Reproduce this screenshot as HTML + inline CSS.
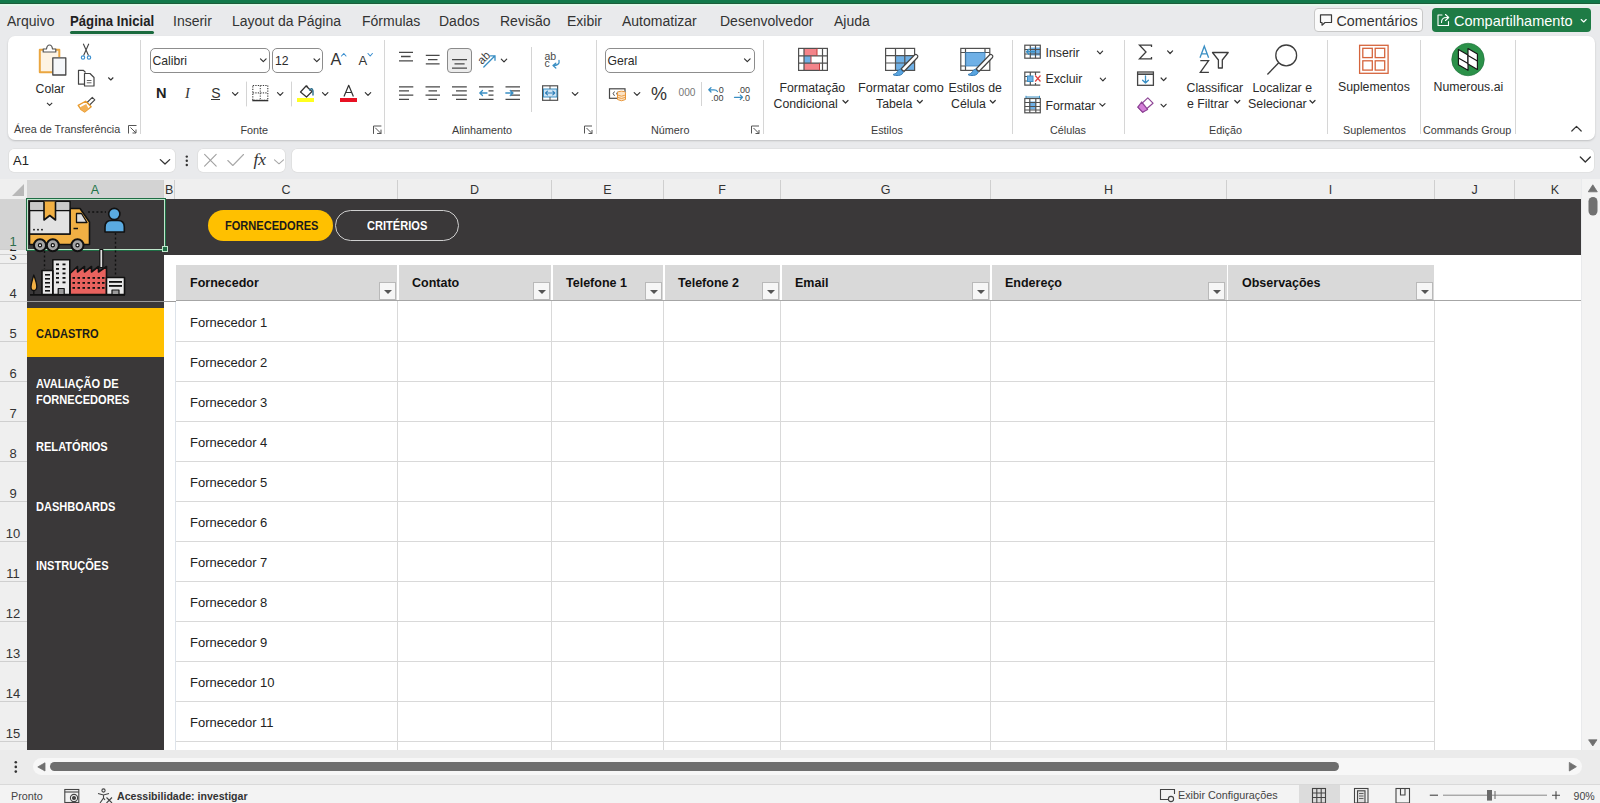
<!DOCTYPE html>
<html><head><meta charset="utf-8">
<style>
*{box-sizing:border-box}
html,body{margin:0;padding:0}
body{width:1600px;height:803px;overflow:hidden;position:relative;background:#e9eaec;font-family:"Liberation Sans",sans-serif;color:#242424}
.a{position:absolute}
.t{position:absolute;white-space:nowrap;line-height:1}
.sep{position:absolute;width:1px;background:#d6d6d6}
.gl{position:absolute;font-size:10.8px;color:#3b3b3b;white-space:nowrap;line-height:1}
.rb{font-size:12.3px;color:#2b2b2b}
.chev{position:absolute;width:5px;height:5px;border-right:1.2px solid #444;border-bottom:1.2px solid #444;transform:rotate(45deg)}
.ch{position:absolute;top:180px;height:19px;font-size:12.5px;color:#333;text-align:center;line-height:20px;border-right:1px solid #cfcfcf}
.rn{position:absolute;left:0;width:26px;text-align:center;font-size:13px}
.rh{position:absolute;left:0;width:27px;font-size:13px;color:#333;text-align:center;border-bottom:1px solid #d3d3d3;background:#f0f0f0}
.th{position:absolute;top:265px;height:36px;background:#d9d9d9;font-weight:bold;font-size:12.5px;color:#111}
.fb{position:absolute;top:282px;width:17px;height:18px;background:#f6f6f6;border:1px solid #b9b9b9}
.fb:after{content:"";position:absolute;left:4px;top:7px;border-left:4px solid transparent;border-right:4px solid transparent;border-top:4px solid #555}
.cell{position:absolute;left:190px;font-size:13px;color:#222;white-space:nowrap;line-height:1}
.nav{position:absolute;left:36px;font-weight:bold;font-size:12.3px;color:#fff;white-space:nowrap;line-height:16px;transform-origin:0 0;transform:scaleX(.9)}
</style></head>
<body>
<!-- top green bar -->
<div class="a" style="left:0;top:0;width:1600px;height:4px;background:#11794a"></div>
<div class="a" style="left:0;top:3px;width:1600px;height:1px;background:#1b5e3a"></div>
<div class="a" style="left:0;top:4px;width:1600px;height:2px;background:#e2f8ea"></div>

<!-- tabs -->
<div id="tabs">
<span class="t" style="left:7px;top:14px;font-size:14px;color:#333">Arquivo</span>
<span class="t" style="left:70px;top:14px;font-size:14px;font-weight:bold;color:#222;transform-origin:0 0;transform:scaleX(.94)">Página Inicial</span>
<span class="t" style="left:173px;top:14px;font-size:14px;color:#333">Inserir</span>
<span class="t" style="left:232px;top:14px;font-size:14px;color:#333">Layout da Página</span>
<span class="t" style="left:362px;top:14px;font-size:14px;color:#333">Fórmulas</span>
<span class="t" style="left:439px;top:14px;font-size:14px;color:#333">Dados</span>
<span class="t" style="left:500px;top:14px;font-size:14px;color:#333">Revisão</span>
<span class="t" style="left:567px;top:14px;font-size:14px;color:#333">Exibir</span>
<span class="t" style="left:622px;top:14px;font-size:14px;color:#333">Automatizar</span>
<span class="t" style="left:720px;top:14px;font-size:14px;color:#333">Desenvolvedor</span>
<span class="t" style="left:834px;top:14px;font-size:14px;color:#333">Ajuda</span>
<div class="a" style="left:70px;top:31px;width:84px;height:3px;border-radius:2px;background:#1b6b3f"></div>
</div>

<!-- comments / share -->
<div class="a" style="left:1314px;top:8px;width:109px;height:24px;border:1px solid #c8c8c8;border-radius:4px;background:#fbfbfb"></div>
<span class="t" style="left:1336.5px;top:14.3px;font-size:14.3px;color:#333">Comentários</span>
<svg class="a" style="left:1318px;top:12px" width="16" height="16" viewBox="0 0 16 16"><path d="M2.5 2.8 H13.5 V10.5 H7 L4 13.2 V10.5 H2.5 Z" fill="none" stroke="#3a3a3a" stroke-width="1.2" stroke-linejoin="round"/></svg>
<div class="a" style="left:1432px;top:8px;width:159px;height:24px;border-radius:4px;background:#1e7b45"></div>
<span class="t" style="left:1454px;top:14.2px;font-size:14.5px;color:#fff">Compartilhamento</span>
<svg class="a" style="left:1435px;top:12px" width="156" height="16" viewBox="1435 12 156 16"><g fill="none" stroke="#fff" stroke-width="1.1" stroke-linejoin="round" stroke-linecap="round"><path d="M1442 15 H1438 V25.5 H1448.5 V21.5"/><path d="M1441.5 22.5 Q1441.5 17.5 1446.5 17.5 H1448 M1445.5 14.5 L1448.7 17.5 L1445.5 20.5"/><path d="M1581.2 19.5 L1583.7 22 L1586.2 19.5"/></g></svg>

<!-- ribbon panel -->
<div id="ribbon" class="a" style="left:8px;top:36px;width:1587px;height:104px;background:#fff;border-radius:7px;box-shadow:0 1px 2px rgba(0,0,0,.18)"></div>
<div class="sep" style="left:140px;top:40px;height:94px"></div>
<div class="sep" style="left:384px;top:40px;height:94px"></div>
<div class="sep" style="left:596px;top:40px;height:94px"></div>
<div class="sep" style="left:763px;top:40px;height:94px"></div>
<div class="sep" style="left:1012px;top:40px;height:94px"></div>
<div class="sep" style="left:1124px;top:40px;height:94px"></div>
<div class="sep" style="left:1327px;top:40px;height:94px"></div>
<div class="sep" style="left:1420px;top:40px;height:94px"></div>
<div class="sep" style="left:1515px;top:40px;height:94px"></div>

<!-- ===== ribbon: clipboard ===== -->
<svg class="a" style="left:0;top:36px" width="140" height="80" viewBox="0 36 140 80">
<g fill="none" stroke-linejoin="round">
<rect x="39.8" y="49.8" width="19.5" height="22.4" fill="#fdf3e3" stroke="none"/>
<path d="M45 49.8 H39.8 V72.2 H52.5" stroke="#eaa640" stroke-width="2"/>
<path d="M52.5 49.8 H59.3 V57" stroke="#eaa640" stroke-width="2"/>
<path d="M43.2 52 V49 H46.5 Q47 45 49.5 45 Q52 45 52.5 49 H55.8 V52 Z" stroke="#555" stroke-width="1.2" fill="#fff"/>
<rect x="52.8" y="57.8" width="13" height="17.2" stroke="#454545" stroke-width="1.3" fill="#f5f7fa"/>
<path d="M47 102.8 L49.6 105.3 L52.2 102.8" stroke="#333" stroke-width="1.1"/>
<!-- scissors -->
<path d="M83.3 43.8 L88.5 55.5 M88.8 43.8 L83.6 55.5" stroke="#444" stroke-width="1.1"/>
<circle cx="83" cy="57.6" r="1.7" stroke="#3a8fd0" stroke-width="1.1"/>
<circle cx="89" cy="57.6" r="1.7" stroke="#3a8fd0" stroke-width="1.1"/>
<!-- copy -->
<path d="M84.5 84.2 H78.5 V70.3 H83.5 L85.5 72.5" stroke="#444" stroke-width="1.2"/>
<path d="M84.5 73.5 H90 L94 77.5 V86 H84.5 Z" stroke="#444" stroke-width="1.2" fill="#fff"/>
<path d="M86.8 80.5 H91.5 M86.8 82.8 H91.5" stroke="#555" stroke-width="0.9"/>
<path d="M108.3 77.5 L110.8 80 L113.3 77.5" stroke="#333" stroke-width="1.1"/>
<!-- format painter -->
<path d="M92.3 97.3 L94.8 99.8 L89.6 105 L87.1 102.5 Z" stroke="#454545" stroke-width="1.1" fill="#fff"/>
<path d="M85.6 101.2 L91.2 106.8 L84.6 112 Q80.2 109.6 78.2 105.4 Z" stroke="#e99a2c" stroke-width="1.3" fill="#fff"/>
<path d="M79.6 107.6 L86.2 104 L88.6 108.8 L84.6 112 Q81.4 110.2 79.6 107.6 Z" fill="#f2b055" stroke="none"/>
</g>
</svg>
<span class="t rb" style="left:35.5px;top:82.5px">Colar</span>
<svg class="a" style="left:127px;top:124px" width="11" height="11" viewBox="0 0 11 11"><path d="M1.5 9.5 V1.5 H9.5" fill="none" stroke="#555" stroke-width="1"/><path d="M3.5 3.5 L9 9 M9 5.5 V9 H5.5" fill="none" stroke="#555" stroke-width="1"/></svg>
<!-- ===== ribbon: fonte ===== -->
<div class="a" style="left:150px;top:47.5px;width:119.5px;height:25px;border:1px solid #8d8d8d;border-radius:5px;background:#fff"></div>
<span class="t" style="left:152.5px;top:54.8px;font-size:12.2px;color:#2b2b2b">Calibri</span>
<div class="a" style="left:272px;top:47.5px;width:50.5px;height:25px;border:1px solid #8d8d8d;border-radius:5px;background:#fff"></div>
<span class="t" style="left:275px;top:54.8px;font-size:12.2px;color:#2b2b2b">12</span>
<svg class="a" style="left:0;top:36px" width="390" height="100" viewBox="0 36 390 100">
<g fill="none" stroke-linecap="round" stroke-linejoin="round">
<path d="M260.5 58.8 L263.3 61.6 L266.1 58.8" stroke="#333" stroke-width="1.2"/>
<path d="M314 58.8 L316.8 61.6 L319.6 58.8" stroke="#333" stroke-width="1.2"/>
<path d="M341.5 56 L343.8 53.5 L346 56" stroke="#3a8fd0" stroke-width="1.1"/>
<path d="M368 53.5 L370.2 56 L372.4 53.5" stroke="#3a8fd0" stroke-width="1.1"/>
<path d="M232.5 92.6 L235.2 95.3 L237.9 92.6" stroke="#333" stroke-width="1.2"/>
<path d="M277.5 92.6 L280.2 95.3 L282.9 92.6" stroke="#333" stroke-width="1.2"/>
<path d="M322.5 92.6 L325.2 95.3 L327.9 92.6" stroke="#333" stroke-width="1.2"/>
<path d="M365.3 92.6 L368 95.3 L370.7 92.6" stroke="#333" stroke-width="1.2"/>
<!-- borders -->
<rect x="252.8" y="85.5" width="15" height="14.8" stroke="#3a3a3a" stroke-width="1.1" stroke-dasharray="1.3 1.2" stroke-linecap="butt"/>
<path d="M260.3 85.5 V100 M252.8 92.9 H267.8" stroke="#555" stroke-width="1.1" stroke-dasharray="1.3 1.2" stroke-linecap="butt"/>
<path d="M252.3 100.6 H268.3" stroke="#333" stroke-width="1.4" stroke-linecap="butt"/>
<!-- fill -->
<path d="M300.5 92 L306 86 L312 91.5 L306.5 97 Z" stroke="#333" stroke-width="1.2"/>
<path d="M305.5 86.5 Q307 84.5 308 86.5" stroke="#333" stroke-width="1"/>
<path d="M309.5 90 Q312 87 313 91 V95" stroke="#2e6f8c" stroke-width="1.4"/>
<rect x="297" y="98" width="17" height="4" fill="#ffff1f" stroke="none"/>
<!-- font color -->
<path d="M344 96.6 L348.7 85.3 L353.4 96.6 M345.8 92.5 H351.6" stroke="#333" stroke-width="1.2" stroke-linecap="butt"/>
<rect x="340" y="98" width="17" height="4" fill="#e81123" stroke="none"/>
<!-- separators -->
<path d="M246.5 82 V106 M291.5 82 V106" stroke="#d4d4d4" stroke-width="1"/>
<!-- launcher -->
<path d="M373.5 133.5 V126 H381" stroke="#555" stroke-width="1"/><path d="M375.5 128 L381 133.5 M381 130 V133.5 H377.5" stroke="#555" stroke-width="1"/>
</g>
</svg>
<span class="t" style="left:330.5px;top:51px;font-size:16.2px;color:#333">A</span>
<span class="t" style="left:358.5px;top:54px;font-size:13px;color:#333">A</span>
<span class="t" style="left:156px;top:85.5px;font-size:14.6px;font-weight:bold;color:#222">N</span>
<span class="t" style="left:185px;top:85.7px;font-size:14.5px;font-style:italic;font-family:'Liberation Serif',serif;color:#333">I</span>
<span class="t" style="left:211.2px;top:85.7px;font-size:14px;color:#333">S</span>
<div class="a" style="left:211px;top:99px;width:9px;height:1.2px;background:#333"></div>

<!-- ===== ribbon: alinhamento + numero ===== -->
<div class="a" style="left:605px;top:48px;width:150px;height:25px;border:1px solid #8d8d8d;border-radius:5px;background:#fff"></div>
<span class="t" style="left:607.5px;top:54.8px;font-size:12.2px;color:#2b2b2b">Geral</span>

<div class="a" style="left:447px;top:47.5px;width:24.5px;height:25px;border:1px solid #8a8a8a;border-radius:4px;background:#ececec"></div>
<svg class="a" style="left:380px;top:36px" width="400" height="100" viewBox="380 36 400 100">
<g fill="none" stroke="#484848" stroke-width="1.3" stroke-linecap="butt">
<path d="M399 52.3 H413 M401 56.5 H410.6 M399 60.9 H413"/>
<path d="M425.8 55.3 H439.6 M428 59.6 H437.5 M425.8 63.9 H439.6"/>
<path d="M452 59.6 H467 M454.5 63.9 H464.6 M452 68.2 H467"/>
<path d="M399 86.8 H413.3 M399 90.9 H409 M399 95.1 H413.3 M399 99.3 H409"/>
<path d="M425.5 86.8 H440 M428.5 90.9 H437 M425.5 95.1 H440 M428.5 99.3 H437"/>
<path d="M452 86.8 H466.8 M456 90.9 H466.8 M452 95.1 H466.8 M456 99.3 H466.8"/>
<path d="M479 86.8 H493.5 M488.5 90.9 H493.5 M488.5 95.1 H493.5 M479 99.3 H493.5"/>
<path d="M505.5 86.8 H520 M510.5 90.9 H520 M510.5 95.1 H520 M505.5 99.3 H520"/>
</g>
<g fill="none" stroke="#3a8fc4" stroke-width="1.3" stroke-linecap="round" stroke-linejoin="round">
<path d="M487 93 H479.8 M482.5 90.5 L479.8 93 L482.5 95.5"/>
<path d="M505.8 93 H513 M510.3 90.5 L513 93 L510.3 95.5"/>
<path d="M483.8 67 L495 55.8 M490.5 55.8 H495 V60.3"/>
<path d="M559 60.5 Q560 65 554 65.5 M555.8 63.2 L553 65.6 L555.8 68"/>
</g>
<text x="0" y="0" transform="translate(482,65) rotate(-45)" font-family="Liberation Sans" font-size="11.5" fill="#404040">ab</text>
<text x="544.5" y="59.6" font-family="Liberation Sans" font-size="10.5" fill="#484848">ab</text>
<text x="544.6" y="67.4" font-family="Liberation Sans" font-size="10.5" fill="#484848">c</text>
<!-- merge -->
<rect x="542.6" y="85.8" width="15" height="14.5" fill="#fff" stroke="#505050" stroke-width="1.2"/>
<rect x="543.5" y="89" width="13.4" height="8" fill="#cfe4f4" stroke="#3a8fc4" stroke-width="1"/>
<path d="M550 85.8 V89 M550 97 V100.3" stroke="#505050" stroke-width="1"/>
<path d="M545.5 93 H554.8 M547.5 91.2 L545.5 93 L547.5 94.8 M552.8 91.2 L554.8 93 L552.8 94.8" fill="none" stroke="#2f7fb8" stroke-width="1.1" stroke-linecap="round" stroke-linejoin="round"/>
<!-- chevrons -->
<g fill="none" stroke="#333" stroke-width="1.2" stroke-linecap="round" stroke-linejoin="round">
<path d="M501.3 59.2 L504 61.9 L506.7 59.2"/>
<path d="M572.3 92.6 L575.1 95.4 L577.9 92.6"/>
<path d="M634.2 92.6 L637 95.4 L639.8 92.6"/>
<path d="M744.5 58.8 L747.3 61.6 L750.1 58.8"/>
</g>
<path d="M531.5 47 V112 M701.5 82 V106" stroke="#d4d4d4" stroke-width="1"/>
<!-- launchers -->
<g fill="none" stroke="#555" stroke-width="1">
<path d="M584.5 133.5 V126 H592 M586.5 128 L592 133.5 M592 130 V133.5 H588.5"/>
<path d="M751.5 133.5 V126 H759 M753.5 128 L759 133.5 M759 130 V133.5 H755.5"/>
</g>
<!-- currency -->
<rect x="609.5" y="88.8" width="15.5" height="9.5" fill="#fff" stroke="#474747" stroke-width="1.2"/>
<path d="M614.5 91.5 Q611.8 93.5 614.5 95.8 M618 91.5 Q615.3 93.5 618 95.8" fill="none" stroke="#474747" stroke-width="1"/>
<ellipse cx="621.5" cy="92.8" rx="4" ry="1.6" fill="#fbe2c4" stroke="#e8963a" stroke-width="1"/>
<path d="M617.5 92.8 V99.5 Q621.5 102 625.5 99.5 V92.8" fill="#fbe2c4" stroke="#e8963a" stroke-width="1"/>
<path d="M617.5 95 Q621.5 97.4 625.5 95 M617.5 97.3 Q621.5 99.7 625.5 97.3" fill="none" stroke="#e8963a" stroke-width="0.9"/>
<!-- decimals -->
<g fill="none" stroke="#3a8fc4" stroke-width="1.3" stroke-linecap="round" stroke-linejoin="round">
<path d="M717.5 91.5 Q716.5 89.8 714 89.8 H708.8 M711 87.6 L708.8 89.8 L711 92"/>
<path d="M734.5 97.3 H742.5 M740.3 95.1 L742.5 97.3 L740.3 99.5"/>
</g>
<g font-family="Liberation Sans" fill="#3c3c3c">
<text x="718.8" y="92.6" font-size="9">0</text>
<text x="711" y="100.6" font-size="9">.00</text>
<text x="737.6" y="92.6" font-size="9">.00</text>
<text x="742.6" y="100.6" font-size="9">.0</text>
</g>
</svg>
<span class="t" style="left:651px;top:85px;font-size:18px;color:#333">%</span>
<span class="t" style="left:678.5px;top:88px;font-size:10.2px;color:#777">000</span>

<!-- ===== ribbon: estilos, celulas, edicao, suplementos ===== -->
<svg class="a" style="left:770px;top:36px" width="830" height="100" viewBox="770 36 830 100">
<!-- conditional formatting -->
<g stroke="none">
<rect x="804" y="48" width="13" height="7.8" fill="#f4848a"/>
<rect x="804" y="63.2" width="15.5" height="7.4" fill="#f4848a"/>
<rect x="804" y="55.8" width="7" height="7.4" fill="#6fb0e6"/>
</g>
<g fill="none" stroke="#505050" stroke-width="1.2">
<rect x="798.6" y="48.4" width="28.8" height="22"/>
<path d="M804 48.4 V70.4 M822.5 48.4 V70.4 M798.6 55.8 H827.4 M798.6 63.2 H827.4"/>
<path d="M817 48.4 V55.8 M811 55.8 V63.2 M819.5 63.2 V70.4" stroke="#c43a3a" stroke-width="1"/>
</g>
<!-- format as table -->
<rect x="895.5" y="55.5" width="19.2" height="15.1" fill="#6fb0e6"/>
<g fill="none" stroke="#505050" stroke-width="1.2">
<rect x="885.6" y="48.4" width="29" height="22"/>
<path d="M895.5 48.4 V70.4 M904.8 48.4 V70.4 M885.6 55.6 H914.6 M885.6 63 H914.6"/>
</g>
<path d="M916.3 54.5 Q918.5 55.5 917.5 57.5 L904 71.5 L901 69 L914.5 55 Q915.3 54.3 916.3 54.5 Z" fill="#fff" stroke="#454545" stroke-width="1.2" stroke-linejoin="round"/>
<path d="M900.2 69.3 L903.3 72.2 Q902 76 895.5 75.5 Q893.5 75.2 893 74.5 Q896.5 74 897.5 71.5 Q898.2 69.6 900.2 69.3 Z" fill="#5aa5e0" stroke="#3a7fb8" stroke-width="1"/>
<!-- cell styles -->
<rect x="965.5" y="52.5" width="19.5" height="13.5" fill="#6fb0e6"/>
<g fill="none" stroke="#505050" stroke-width="1.2">
<rect x="960.8" y="48.4" width="29" height="22"/>
<path d="M965.5 48.4 V70.4 M985 48.4 V52.5 M960.8 52.5 H989.8 M960.8 66 H965.5" />
</g>
<path d="M965.5 52.5 V66 H985 V52.5 Z" fill="none" stroke="#3a7fb8" stroke-width="0.8"/>
<path d="M991.3 54.5 Q993.5 55.5 992.5 57.5 L979 71.5 L976 69 L989.5 55 Q990.3 54.3 991.3 54.5 Z" fill="#fff" stroke="#454545" stroke-width="1.2" stroke-linejoin="round"/>
<path d="M975.2 69.3 L978.3 72.2 Q977 76 970.5 75.5 Q968.5 75.2 968 74.5 Q971.5 74 972.5 71.5 Q973.2 69.6 975.2 69.3 Z" fill="#5aa5e0" stroke="#3a7fb8" stroke-width="1"/>
<!-- insert cells -->
<rect x="1031" y="47.5" width="9" height="8" fill="#6fb0e6"/>
<g fill="none" stroke="#505050" stroke-width="1.2">
<rect x="1024.8" y="45.2" width="15.5" height="13"/>
<path d="M1030.3 45.2 V58.2 M1035.5 45.2 V58.2 M1024.8 49.5 H1040.3 M1024.8 54 H1040.3"/>
</g>
<path d="M1035 51.8 H1026.5 M1029 49.3 L1026.5 51.8 L1029 54.3" fill="none" stroke="#3a8fc4" stroke-width="1.4" stroke-linecap="round" stroke-linejoin="round"/>
<!-- delete cells -->
<g fill="none" stroke="#505050" stroke-width="1.2">
<path d="M1040.3 72.2 H1024.8 V85.2 H1040.3 M1030.3 72.2 V85.2 M1035.5 72.2 V75 M1035.5 83 V85.2 M1024.8 76.5 H1033 M1024.8 81 H1033"/>
</g>
<rect x="1027.5" y="76" width="5.5" height="5.5" fill="#6fb0e6" stroke="#3a8fc4" stroke-width="1"/>
<path d="M1035.2 75.5 L1040.5 81.5 M1040.5 75.5 L1035.2 81.5" stroke="#e04040" stroke-width="1.2"/>
<!-- format cells -->
<rect x="1029.5" y="101.5" width="6.5" height="8" fill="#6fb0e6"/>
<g fill="none" stroke="#505050" stroke-width="1.2">
<rect x="1024.8" y="98.5" width="15.5" height="14.3"/>
<path d="M1029.8 98.5 V112.8 M1035.8 98.5 V112.8 M1024.8 102.5 H1040.3 M1024.8 106.5 H1040.3 M1024.8 110 H1040.3"/>
</g>
<path d="M1026 97 H1039.5 M1026 95.8 V98.2 M1039.5 95.8 V98.2" stroke="#3a8fc4" stroke-width="1"/>
<!-- sigma / fill / clear -->
<path d="M1151.5 47 V45.2 H1139.5 L1146 52 L1139.5 58.8 H1151.5 V57" fill="none" stroke="#3c3c3c" stroke-width="1.3" stroke-linejoin="miter"/>
<rect x="1137.6" y="72" width="15.8" height="13.3" fill="#fff" stroke="#454545" stroke-width="1.3"/>
<path d="M1137.6 74.2 H1153.4" stroke="#454545" stroke-width="1.6"/>
<path d="M1145.5 76 V83 M1142.6 80.2 L1145.5 83 L1148.4 80.2" fill="none" stroke="#3a8fc4" stroke-width="1.3" stroke-linecap="round" stroke-linejoin="round"/>
<path d="M1147.8 97.9 L1153 103.2 L1142.6 112.2 L1137.9 107.1 Z" fill="#fff" stroke="#8e4596" stroke-width="1.2" stroke-linejoin="round"/>
<path d="M1141.6 102 L1147.6 109.4 L1142.6 112.2 L1137.9 107.1 Z" fill="#d47ed8" stroke="#8e4596" stroke-width="1.2" stroke-linejoin="round"/>
<!-- sort filter -->
<path d="M1200 57.8 L1204.3 46.2 L1208.6 57.8 M1201.5 53.8 H1207.1" fill="none" stroke="#3a8fc4" stroke-width="1.3"/>
<path d="M1200.3 60.6 H1208.6 L1200.3 72.3 H1208.9" fill="none" stroke="#3c3c3c" stroke-width="1.3"/>
<path d="M1212.5 52.5 H1228.2 L1222.3 60 V68 H1218.4 V60 Z" fill="none" stroke="#3c3c3c" stroke-width="1.3" stroke-linejoin="round"/>
<!-- find -->
<circle cx="1286.2" cy="55.4" r="10.4" fill="none" stroke="#3c3c3c" stroke-width="1.3"/>
<path d="M1278.7 62.8 L1267.4 74.5" stroke="#3c3c3c" stroke-width="1.3"/>
<!-- suplementos -->
<g fill="none" stroke="#d5643c" stroke-width="1.3">
<rect x="1359.6" y="45.3" width="28.5" height="28"/>
<rect x="1362.8" y="48.3" width="9.5" height="9.3"/><rect x="1375.2" y="48.3" width="9.5" height="9.3"/>
<rect x="1362.8" y="60.8" width="9.5" height="9.3"/><rect x="1375.2" y="60.8" width="9.5" height="9.3"/>
</g>
<!-- numerous -->
<circle cx="1468" cy="59.5" r="16.3" fill="#2b9149" stroke="#1f6f3a" stroke-width="0.6"/>
<g fill="#fff" stroke="#151515" stroke-width="1.15" stroke-linejoin="round">
<path d="M1458.4 49.5 L1468 55 V70.3 L1458.4 64.8 Z"/>
<path d="M1468 48.5 L1477.4 54 V69.5 L1468 64 Z"/>
<path d="M1458.4 58 L1468 63.5 M1468 55.5 L1477.4 61" fill="none"/>
</g>
<!-- chevrons -->
<g fill="none" stroke="#333" stroke-width="1.2" stroke-linecap="round" stroke-linejoin="round">
<path d="M1097.4 51.2 L1100 53.8 L1102.6 51.2"/>
<path d="M1100.3 78.2 L1102.9 80.8 L1105.5 78.2"/>
<path d="M1099.8 103.6 L1102.4 106.2 L1105 103.6"/>
<path d="M1167.6 50.9 L1170.1 53.5 L1172.6 50.9"/>
<path d="M1161.1 78 L1163.6 80.6 L1166.1 78"/>
<path d="M1161.1 104.3 L1163.6 106.9 L1166.1 104.3"/>
<path d="M843 100.5 L845.5 103 L848 100.5"/>
<path d="M917.3 100.5 L919.8 103 L922.3 100.5"/>
<path d="M990.3 100.5 L992.8 103 L995.3 100.5"/>
<path d="M1234.8 100.5 L1237.3 103 L1239.8 100.5"/>
<path d="M1310 100.5 L1312.5 103 L1315 100.5"/>
<path d="M1571.8 131 L1576.5 126.3 L1581.2 131"/>
</g>
</svg>
<span class="t rb" style="left:779.5px;top:81.5px">Formatação</span>
<span class="t rb" style="left:773.5px;top:97.7px">Condicional</span>
<span class="t rb" style="left:857.5px;top:81.5px;transform-origin:0 0;transform:scaleX(1.03)">Formatar como</span>
<span class="t rb" style="left:876px;top:97.7px">Tabela</span>
<span class="t rb" style="left:948.5px;top:81.5px">Estilos de</span>
<span class="t rb" style="left:951px;top:97.7px">Célula</span>
<span class="t rb" style="left:1045.5px;top:46.8px">Inserir</span>
<span class="t rb" style="left:1045.5px;top:73px">Excluir</span>
<span class="t rb" style="left:1045.5px;top:99.6px">Formatar</span>
<span class="t rb" style="left:1186.5px;top:81.7px">Classificar</span>
<span class="t rb" style="left:1187px;top:98.4px">e Filtrar</span>
<span class="t rb" style="left:1252.5px;top:81.7px">Localizar e</span>
<span class="t rb" style="left:1247.5px;top:98.4px;transform-origin:0 0;transform:scaleX(1.01)">Selecionar</span>
<span class="t rb" style="left:1338px;top:80.8px">Suplementos</span>
<span class="t rb" style="left:1433.5px;top:81px">Numerous.ai</span>

<!-- group labels -->
<span class="gl" style="left:14px;top:124px">Área de Transferência</span>
<span class="gl" style="left:240.5px;top:124.5px">Fonte</span>
<span class="gl" style="left:452px;top:124.5px">Alinhamento</span>
<span class="gl" style="left:651px;top:124.5px">Número</span>
<span class="gl" style="left:871px;top:125px">Estilos</span>
<span class="gl" style="left:1050px;top:125px">Células</span>
<span class="gl" style="left:1209px;top:125px">Edição</span>
<span class="gl" style="left:1343px;top:125px">Suplementos</span>
<span class="gl" style="left:1423px;top:125px">Commands Group</span>

<!-- formula bar -->
<div class="a" style="left:8.5px;top:148.5px;width:166.5px;height:23.5px;background:#fff;border-radius:5px;box-shadow:0 0 0 0.6px #dadada"></div>
<span class="t" style="left:13px;top:154px;font-size:13px;color:#222">A1</span>
<div class="a" style="left:198.3px;top:148.5px;width:87px;height:23.5px;background:#fff;border-radius:5px;box-shadow:0 0 0 0.6px #dadada"></div>
<div class="a" style="left:292px;top:148.5px;width:1302px;height:23.5px;background:#fff;border-radius:5px;box-shadow:0 0 0 0.6px #dadada"></div>

<!-- formula bar icons -->
<svg class="a" style="left:0;top:145px" width="1600" height="30" viewBox="0 145 1600 30">
<g fill="none" stroke-linecap="round" stroke-linejoin="round">
<path d="M160.3 159.6 L165 164 L169.7 159.6" stroke="#333" stroke-width="1.3"/>
<path d="M204.6 154.4 L216.2 166.2 M216.2 154.4 L204.6 166.2" stroke="#a0a0a0" stroke-width="1.1"/>
<path d="M227.8 160.5 L232.8 165.5 L243.5 154.5" stroke="#a8a8a8" stroke-width="1.1"/>
<path d="M274.5 159.8 L279 163.8 L283.5 159.8" stroke="#a8a8a8" stroke-width="1.1"/>
<path d="M1580.3 157 L1585.3 162 L1590.3 157" stroke="#333" stroke-width="1.3"/>
</g>
<g fill="#333"><circle cx="186.8" cy="156.6" r="1.2"/><circle cx="186.8" cy="160.8" r="1.2"/><circle cx="186.8" cy="165" r="1.2"/></g>
</svg>
<span class="t" style="left:253.5px;top:150.5px;font-size:17.5px;font-style:italic;font-family:'Liberation Serif',serif;color:#333">fx</span>

<!-- column headers -->
<div class="a" style="left:0;top:179px;width:1581px;height:20px;background:#efefef"></div>
<div id="colh">
<div class="ch" style="left:27px;width:137px;background:#d3d3d3;color:#217346">A</div>
<div class="ch" style="left:164px;width:11px;text-align:left;padding-left:1px">B</div>
<div class="ch" style="left:175px;width:223px">C</div>
<div class="ch" style="left:398px;width:154px">D</div>
<div class="ch" style="left:552px;width:112px">E</div>
<div class="ch" style="left:664px;width:117px">F</div>
<div class="ch" style="left:781px;width:210px">G</div>
<div class="ch" style="left:991px;width:236px">H</div>
<div class="ch" style="left:1227px;width:208px">I</div>
<div class="ch" style="left:1435px;width:80px">J</div>
<div class="ch" style="left:1515px;width:66px;border-right:none;padding-left:14px">K</div>
</div>

<!-- corner triangle -->
<svg class="a" style="left:10px;top:182px" width="16" height="16" viewBox="0 0 16 16"><path d="M2 14 L14 2 V14 Z" fill="#b8b8b8"/></svg>
<div class="a" style="left:0;top:198.5px;width:27px;height:1px;background:#c4c4c4"></div>
<!-- grid background -->
<div class="a" style="left:27px;top:199px;width:1554px;height:551px;background:#fff"></div>

<!-- row headers -->
<div id="rowh">
<div class="a" style="left:0;top:199px;width:27px;height:551px;background:#efefef"></div>
<div class="a" style="left:0;top:199px;width:27px;height:50px;background:#d3d3d3"></div>
<div class="a" style="left:0;top:249px;width:27px;height:1px;background:#cfcfcf"></div>
<span class="t rn" style="top:234.7px;color:#2e6e4e">1</span>
<div class="a" style="left:0;top:254px;width:27px;height:1px;background:#cfcfcf"></div>
<div class="a" style="left:0;top:263px;width:27px;height:1px;background:#cfcfcf"></div>
<div class="a" style="left:0;top:301px;width:27px;height:1px;background:#cfcfcf"></div>
<span class="t rn" style="top:286.7px;color:#333">4</span>
<div class="a" style="left:0;top:341px;width:27px;height:1px;background:#cfcfcf"></div>
<span class="t rn" style="top:326.7px;color:#333">5</span>
<div class="a" style="left:0;top:381px;width:27px;height:1px;background:#cfcfcf"></div>
<span class="t rn" style="top:366.7px;color:#333">6</span>
<div class="a" style="left:0;top:421px;width:27px;height:1px;background:#cfcfcf"></div>
<span class="t rn" style="top:406.7px;color:#333">7</span>
<div class="a" style="left:0;top:461px;width:27px;height:1px;background:#cfcfcf"></div>
<span class="t rn" style="top:446.7px;color:#333">8</span>
<div class="a" style="left:0;top:501px;width:27px;height:1px;background:#cfcfcf"></div>
<span class="t rn" style="top:486.7px;color:#333">9</span>
<div class="a" style="left:0;top:541px;width:27px;height:1px;background:#cfcfcf"></div>
<span class="t rn" style="top:526.7px;color:#333">10</span>
<div class="a" style="left:0;top:581px;width:27px;height:1px;background:#cfcfcf"></div>
<span class="t rn" style="top:566.7px;color:#333">11</span>
<div class="a" style="left:0;top:621px;width:27px;height:1px;background:#cfcfcf"></div>
<span class="t rn" style="top:606.7px;color:#333">12</span>
<div class="a" style="left:0;top:661px;width:27px;height:1px;background:#cfcfcf"></div>
<span class="t rn" style="top:646.7px;color:#333">13</span>
<div class="a" style="left:0;top:701px;width:27px;height:1px;background:#cfcfcf"></div>
<span class="t rn" style="top:686.7px;color:#333">14</span>
<div class="a" style="left:0;top:741px;width:27px;height:1px;background:#cfcfcf"></div>
<span class="t rn" style="top:726.7px;color:#333">15</span>
<div class="a" style="left:0;top:249px;width:27px;height:5px;overflow:hidden"><span class="t rn" style="top:-9.4px">2</span></div><div class="a" style="left:0;top:255px;width:27px;height:8px;overflow:hidden"><span class="t rn" style="top:-6.4px">3</span></div>
</div>
<!-- gridlines -->
<div id="grid">
<div class="a" style="left:175px;top:341px;width:1260px;height:1px;background:#d9d9d9"></div>
<div class="a" style="left:175px;top:381px;width:1260px;height:1px;background:#d9d9d9"></div>
<div class="a" style="left:175px;top:421px;width:1260px;height:1px;background:#d9d9d9"></div>
<div class="a" style="left:175px;top:461px;width:1260px;height:1px;background:#d9d9d9"></div>
<div class="a" style="left:175px;top:501px;width:1260px;height:1px;background:#d9d9d9"></div>
<div class="a" style="left:175px;top:541px;width:1260px;height:1px;background:#d9d9d9"></div>
<div class="a" style="left:175px;top:581px;width:1260px;height:1px;background:#d9d9d9"></div>
<div class="a" style="left:175px;top:621px;width:1260px;height:1px;background:#d9d9d9"></div>
<div class="a" style="left:175px;top:661px;width:1260px;height:1px;background:#d9d9d9"></div>
<div class="a" style="left:175px;top:701px;width:1260px;height:1px;background:#d9d9d9"></div>
<div class="a" style="left:175px;top:741px;width:1260px;height:1px;background:#d9d9d9"></div>
<div class="a" style="left:397px;top:301px;width:1px;height:449px;background:#d9d9d9"></div>
<div class="a" style="left:551px;top:301px;width:1px;height:449px;background:#d9d9d9"></div>
<div class="a" style="left:663px;top:301px;width:1px;height:449px;background:#d9d9d9"></div>
<div class="a" style="left:780px;top:301px;width:1px;height:449px;background:#d9d9d9"></div>
<div class="a" style="left:990px;top:301px;width:1px;height:449px;background:#d9d9d9"></div>
<div class="a" style="left:1226px;top:301px;width:1px;height:449px;background:#d9d9d9"></div>
<div class="a" style="left:1434px;top:301px;width:1px;height:449px;background:#d9d9d9"></div>
<div class="a" style="left:175px;top:301px;width:1px;height:449px;background:#dde3ea"></div>
</div>

<!-- dark header band -->
<div class="a" style="left:27px;top:199px;width:1554px;height:56px;background:#3a3839"></div>
<!-- sidebar -->
<div class="a" style="left:27px;top:199px;width:137px;height:551px;background:#3a3839"></div>
<div class="a" style="left:27px;top:308px;width:137px;height:49px;background:#ffc000"></div>
<div class="a" style="left:27px;top:300.5px;width:149px;height:1px;background:#9c9c9c"></div>
<span class="nav" style="top:326px;color:#1a1a1a">CADASTRO</span>
<span class="nav" style="top:376px">AVALIAÇÃO DE<br>FORNECEDORES</span>
<span class="nav" style="top:439.3px">RELATÓRIOS</span>
<span class="nav" style="top:498.6px">DASHBOARDS</span>
<span class="nav" style="top:558.3px">INSTRUÇÕES</span>

<!-- selection rectangle A1 -->
<div class="a" style="left:26px;top:198px;width:140px;height:52.5px;border:1.8px solid #1f6e45;box-shadow:inset 0 0 0 1px #bfe6cc"></div>
<div class="a" style="left:161.5px;top:245.5px;width:6px;height:6px;background:#1f6e45;border:1px solid #bfe6cc"></div>
<svg class="a" style="left:26px;top:198px" width="110" height="102" viewBox="0 0 110 102">
<g stroke="#111" stroke-width="1.6" stroke-linejoin="round">
<!-- dotted lines -->
<path d="M62 14 H80" stroke-dasharray="2 2.2" stroke-width="1.4" fill="none"/>
<path d="M89.5 35 V77" stroke-dasharray="2 2.4" stroke-width="1.4" fill="none"/>
<path d="M18.5 53 V71" stroke-dasharray="2 2.4" stroke-width="1.4" fill="none"/>
<!-- truck body -->
<path d="M44 10.5 H54 L63.5 24 V46.5 H3.5 V36 H44 Z" fill="#f1b044"/>
<path d="M50.5 15.5 H55.5 L61 24.5 H50.5 Z" fill="#dcdcdc" stroke-width="1.3"/>
<path d="M47.5 30.5 H52" stroke-width="1.5"/>
<!-- cargo box -->
<rect x="3.5" y="3.5" width="40.5" height="32.5" fill="#e2e2e2"/>
<path d="M3.5 12.5 H44" />
<rect x="4.2" y="4.2" width="39" height="7.6" fill="#c9c9c9" stroke="none"/>
<path d="M18 3.5 V22 L23.8 17.5 L29.5 22 V3.5" fill="#f1b044"/>
<circle cx="8" cy="31.7" r="0.9" fill="#111" stroke="none"/>
<circle cx="12" cy="31.7" r="0.9" fill="#111" stroke="none"/>
<circle cx="16" cy="31.7" r="0.9" fill="#111" stroke="none"/>
<!-- wheels -->
<circle cx="14" cy="47.3" r="6" fill="#a5a5a5" stroke-width="2"/><circle cx="14" cy="47.3" r="1.6" fill="#fff" stroke-width="1.2"/>
<circle cx="26.8" cy="47.3" r="6" fill="#a5a5a5" stroke-width="2"/><circle cx="26.8" cy="47.3" r="1.6" fill="#fff" stroke-width="1.2"/>
<circle cx="51.5" cy="47.3" r="6" fill="#a5a5a5" stroke-width="2"/><circle cx="51.5" cy="47.3" r="1.6" fill="#fff" stroke-width="1.2"/>
<!-- person -->
<circle cx="88.3" cy="16" r="5.6" fill="#5aaae0"/>
<path d="M79 34 V29 Q79 22.5 85.5 22.5 H92 Q98.3 22.5 98.3 29 V34 Z" fill="#5aaae0"/>
<!-- chimney -->
<rect x="73.8" y="51.5" width="3" height="18" fill="#dedede" stroke-width="1.2"/>
<!-- factory -->
<path d="M44 96.5 V75.5 L51.5 68.5 V74 L58.5 68.5 V74 L65.5 68.5 V74 L72.5 68.5 V74 L80.5 68.5 V96.5 Z" fill="#e8625e"/>
<!-- tall building -->
<rect x="26.8" y="61.8" width="17" height="34.7" fill="#e8e8e8"/>
<rect x="32.2" y="90.5" width="6" height="6" fill="#9a9a9a" stroke-width="1.2"/>
<!-- left building -->
<rect x="16" y="72.5" width="10.8" height="24" fill="#e8e8e8"/>
<!-- right small building -->
<rect x="80.5" y="79.5" width="18" height="17" fill="#e8e8e8"/>
<rect x="86" y="92" width="7" height="4.5" fill="#9a9a9a" stroke-width="1.2"/>
<!-- tree -->
<path d="M7.8 77 Q11 86 10.8 89 Q10.5 92.5 7.8 92.5 Q5 92.5 5 89 Q5 86 7.8 77 Z" fill="#f1b044" stroke-width="1.3"/>
<path d="M7.8 92.5 V96.5" stroke-width="1.3"/>
<!-- ground -->
<path d="M4 96.8 H99" stroke-width="1.8"/>
</g>
<g fill="#111">
<!-- windows left building -->
<rect x="19" y="76" width="5" height="1.6"/><rect x="19" y="80" width="5" height="1.6"/><rect x="19" y="84" width="5" height="1.6"/><rect x="19" y="88" width="5" height="1.6"/><rect x="19" y="92" width="5" height="1.6"/>
<!-- windows tall -->
<rect x="30" y="65.5" width="3" height="1.8"/><rect x="36.5" y="65.5" width="3" height="1.8"/>
<rect x="30" y="70" width="3" height="1.8"/><rect x="36.5" y="70" width="3" height="1.8"/>
<rect x="30" y="74.5" width="3" height="1.8"/><rect x="36.5" y="74.5" width="3" height="1.8"/>
<rect x="30" y="79" width="3" height="1.8"/><rect x="36.5" y="79" width="3" height="1.8"/>
<rect x="30" y="83.5" width="3" height="1.8"/><rect x="36.5" y="83.5" width="3" height="1.8"/>
<!-- factory windows -->
<rect x="46.5" y="79" width="2.5" height="1.8"/><rect x="51.5" y="79" width="2.5" height="1.8"/><rect x="56.5" y="79" width="2.5" height="1.8"/><rect x="61.5" y="79" width="2.5" height="1.8"/><rect x="66.5" y="79" width="2.5" height="1.8"/><rect x="71.5" y="79" width="2.5" height="1.8"/><rect x="76" y="79" width="2.5" height="1.8"/>
<rect x="46.5" y="84" width="2.5" height="1.8"/><rect x="51.5" y="84" width="2.5" height="1.8"/><rect x="56.5" y="84" width="2.5" height="1.8"/><rect x="61.5" y="84" width="2.5" height="1.8"/><rect x="66.5" y="84" width="2.5" height="1.8"/><rect x="71.5" y="84" width="2.5" height="1.8"/><rect x="76" y="84" width="2.5" height="1.8"/>
<rect x="46.5" y="89" width="2.5" height="1.8"/><rect x="51.5" y="89" width="2.5" height="1.8"/><rect x="56.5" y="89" width="2.5" height="1.8"/><rect x="61.5" y="89" width="2.5" height="1.8"/><rect x="66.5" y="89" width="2.5" height="1.8"/><rect x="71.5" y="89" width="2.5" height="1.8"/><rect x="76" y="89" width="2.5" height="1.8"/>
<!-- right building stripes -->
<rect x="83" y="83" width="13" height="1.8"/><rect x="83" y="87" width="13" height="1.8"/>
</g>
</svg>

<!-- header buttons -->
<div class="a" style="left:208px;top:210px;width:125px;height:31px;border-radius:16px;background:#ffc000"></div>
<span class="t" style="left:225px;top:220px;font-size:12.3px;font-weight:bold;color:#1a1a1a;transform-origin:0 0;transform:scaleX(.9)">FORNECEDORES</span>
<div class="a" style="left:335px;top:210px;width:124px;height:31px;border-radius:16px;border:1.5px solid #cfcfcf"></div>
<span class="t" style="left:367px;top:220px;font-size:12.3px;font-weight:bold;color:#fff;transform-origin:0 0;transform:scaleX(.9)">CRITÉRIOS</span>

<!-- table header -->
<div id="thead">
<div class="th" style="left:176px;width:221px"><span class="t" style="left:14px;top:12px">Fornecedor</span></div>
<div class="th" style="left:399px;width:152px"><span class="t" style="left:13px;top:12px">Contato</span></div>
<div class="th" style="left:553px;width:110px"><span class="t" style="left:13px;top:12px">Telefone 1</span></div>
<div class="th" style="left:665px;width:115px"><span class="t" style="left:13px;top:12px">Telefone 2</span></div>
<div class="th" style="left:782px;width:208px"><span class="t" style="left:13px;top:12px">Email</span></div>
<div class="th" style="left:992px;width:235px"><span class="t" style="left:13px;top:12px">Endereço</span></div>
<div class="th" style="left:1228px;width:206px"><span class="t" style="left:14px;top:12px">Observações</span></div>
<div class="a" style="left:176px;top:300px;width:1405px;height:1px;background:#a6a6a6"></div>
<div class="fb" style="left:379px"></div>
<div class="fb" style="left:533px"></div>
<div class="fb" style="left:645px"></div>
<div class="fb" style="left:762px"></div>
<div class="fb" style="left:972px"></div>
<div class="fb" style="left:1208px"></div>
<div class="fb" style="left:1416px"></div>
</div>

<!-- data cells -->
<div id="cells">
<span class="cell" style="top:316px">Fornecedor 1</span>
<span class="cell" style="top:356px">Fornecedor 2</span>
<span class="cell" style="top:396px">Fornecedor 3</span>
<span class="cell" style="top:436px">Fornecedor 4</span>
<span class="cell" style="top:476px">Fornecedor 5</span>
<span class="cell" style="top:516px">Fornecedor 6</span>
<span class="cell" style="top:556px">Fornecedor 7</span>
<span class="cell" style="top:596px">Fornecedor 8</span>
<span class="cell" style="top:636px">Fornecedor 9</span>
<span class="cell" style="top:676px">Fornecedor 10</span>
<span class="cell" style="top:716px">Fornecedor 11</span>
</div>

<!-- vertical scrollbar -->
<div class="a" style="left:1582px;top:179px;width:18px;height:571px;background:#f3f3f3"></div>
<svg class="a" style="left:1582px;top:179px" width="18" height="571" viewBox="1582 179 18 571">
<path d="M1588.3 191.8 L1592.8 184.8 L1597.3 191.8 Z" fill="#707070" stroke="#707070" stroke-width="0.8" stroke-linejoin="round"/>
<rect x="1588.5" y="197" width="9" height="18.5" rx="4.5" fill="#707070"/>
<path d="M1588.6 739.8 L1597 739.8 L1592.8 746 Z" fill="#707070" stroke="#707070" stroke-width="0.8" stroke-linejoin="round"/>
</svg>

<!-- horizontal scroll area -->
<div class="a" style="left:0;top:750px;width:1600px;height:34px;background:#ebebeb"></div>
<div class="a" style="left:32.5px;top:757.5px;width:1549px;height:17px;border-radius:8.5px;background:#f7f7f7"></div>
<div class="a" style="left:50.2px;top:762.2px;width:1289px;height:9px;border-radius:4.5px;background:#6e6e6e"></div>
<svg class="a" style="left:0;top:750px" width="1600" height="34" viewBox="0 750 1600 34">
<circle cx="15.8" cy="762.2" r="1.3" fill="#333"/><circle cx="15.8" cy="766.9" r="1.3" fill="#333"/><circle cx="15.8" cy="771.6" r="1.3" fill="#333"/>
<path d="M45 762.8 L37.8 766.9 L45 771 Z" fill="#707070" stroke="#707070" stroke-width="0.8" stroke-linejoin="round"/>
<path d="M1569.3 762.4 L1576.4 766.7 L1569.3 771 Z" fill="#707070" stroke="#707070" stroke-width="0.8" stroke-linejoin="round"/>
</svg>

<!-- status bar -->
<div class="a" style="left:0;top:784px;width:1600px;height:19px;background:#f3f3f3;border-top:1px solid #d9d9d9"></div>
<div class="a" style="left:1299px;top:785px;width:41px;height:18px;background:#dcdcdc"></div>
<span class="t" style="left:11px;top:790.5px;font-size:10.8px;color:#444">Pronto</span>
<span class="t" style="left:116.5px;top:790.5px;font-size:10.8px;font-weight:bold;color:#333;transform-origin:0 0;transform:scaleX(.98)">Acessibilidade: investigar</span>
<span class="t" style="left:1178px;top:790px;font-size:10.8px;color:#444;transform-origin:0 0;transform:scaleX(1.0)">Exibir Configurações</span>
<span class="t" style="left:1573.5px;top:790.5px;font-size:10.6px;color:#444">90%</span>
<svg class="a" style="left:0;top:784px" width="1600" height="19" viewBox="0 784 1600 19">
<g fill="none" stroke="#444" stroke-width="1.1">
<!-- macro icon -->
<rect x="64.8" y="789.5" width="14" height="13" />
<path d="M64.8 792 H78.8"/>
<circle cx="74" cy="798" r="3.6" fill="#f3f3f3"/>
<circle cx="74" cy="798" r="1.5" fill="#444"/>
<!-- accessibility -->
<circle cx="103.5" cy="790.5" r="1.6"/>
<path d="M98 793.5 L103.5 795 L109 793.5 M103.5 795 V798 L100 803 M103.5 798 L105 800"/>
<path d="M106.5 797.5 L112 803 M112 797.5 L106.5 803"/>
<!-- exibir config -->
<path d="M1168 799.5 H1160.5 V789.5 H1174.5 V794"/>
<circle cx="1171" cy="799" r="2.6"/>
<!-- view icons -->
<rect x="1312.5" y="788.5" width="13" height="14.5"/>
<path d="M1316.8 788.5 V803 M1321.2 788.5 V803 M1312.5 793 H1325.5 M1312.5 797.5 H1325.5"/>
<rect x="1354.5" y="788.5" width="13.5" height="14.5"/>
<rect x="1357.5" y="790.8" width="7.5" height="12" fill="#ddd"/>
<path d="M1359 793.5 H1363.5 M1359 796 H1363.5 M1359 798.5 H1363.5" stroke-width="0.8"/>
<rect x="1396" y="788.5" width="13.5" height="14.5"/>
<path d="M1400.5 788.5 V795 H1405 V788.5"/>
<path d="M1429.8 795.2 H1438"/>
<path d="M1443 795.2 H1547" stroke="#888" stroke-width="1"/>
<path d="M1495 791 V799" stroke="#666" stroke-width="1"/>
<path d="M1552 795.2 H1560 M1556 791.2 V799.2"/>
</g>
<rect x="1487" y="790" width="5" height="10.6" fill="#6a6a6a"/>
</svg>
</body></html>
